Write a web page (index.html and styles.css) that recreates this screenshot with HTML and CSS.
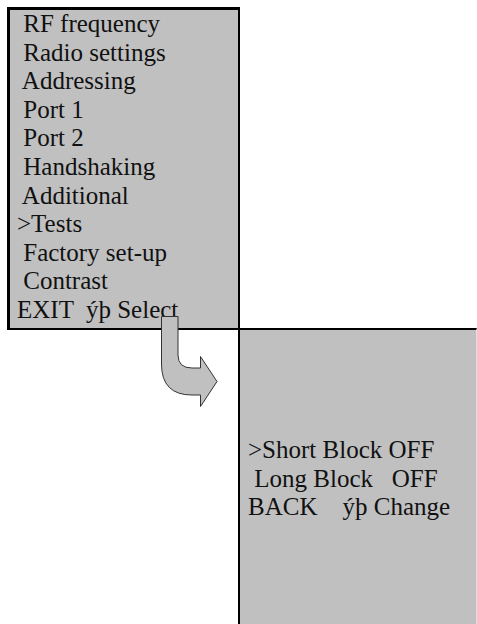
FILE: index.html
```html
<!DOCTYPE html>
<html>
<head>
<meta charset="utf-8">
<link rel="stylesheet" href="styles.css">
</head>
<body>
<div class="page">
  <div class="menu">
    <div class="line"> RF frequency</div>
    <div class="line"> Radio settings</div>
    <div class="line"> Addressing</div>
    <div class="line"> Port 1</div>
    <div class="line"> Port 2</div>
    <div class="line"> Handshaking</div>
    <div class="line"> Additional</div>
    <div class="line">&gt;Tests</div>
    <div class="line"> Factory set-up</div>
    <div class="line"> Contrast</div>
    <div class="line">EXIT  ýþ Select</div>
  </div>
  <div class="sub">
    <div class="line">&gt;Short Block OFF</div>
    <div class="line"> Long Block   OFF</div>
    <div class="line">BACK    ýþ Change</div>
  </div>
  <svg class="arrow" width="70" height="105" viewBox="155 310 70 105" xmlns="http://www.w3.org/2000/svg">
    <path d="M161.5,316.5 H178 V355 Q178,368 192,368 H200.5 V356.5 L217,381.5 L200.5,406.5 V395 H192 Q161.5,395 161.5,364 Z" fill="#c0c0c0" stroke="#333" stroke-width="1"/>
  </svg>
</div>
</body>
</html>
```
FILE: styles.css
```css
html, body {
  margin: 0;
  padding: 0;
  background: #fff;
}
.page {
  position: relative;
  width: 477px;
  height: 624px;
  overflow: hidden;
  padding: 7px 0 0 7px;
  box-sizing: border-box;
  font-family: "Liberation Serif", "Times New Roman", serif;
  font-size: 25px;
  color: #111;
}
.line {
  white-space: pre;
  line-height: 28.6px;
  height: 28.6px;
}
.menu {
  width: 228px;
  height: 318px;
  background: #c0c0c0;
  border-style: solid;
  border-color: #000;
  border-width: 3px 2px 2px 3px;
  padding-left: 7px;
  box-sizing: content-box;
  margin-right: 0;
}
.menu {
  width: 221px;
}
.sub {
  margin-left: 231px;
  margin-top: -2px;
  width: 236px;
  height: 320px;
  background: #c0c0c0;
  border-top: 2px solid #000;
  border-left: 2px solid #000;
  border-right: 1px solid #e0e0e0;
  padding: 106px 0 0 8px;
  box-sizing: border-box;
  width: 239px;
}
.arrow {
  position: absolute;
  left: 155px;
  top: 310px;
}
```
